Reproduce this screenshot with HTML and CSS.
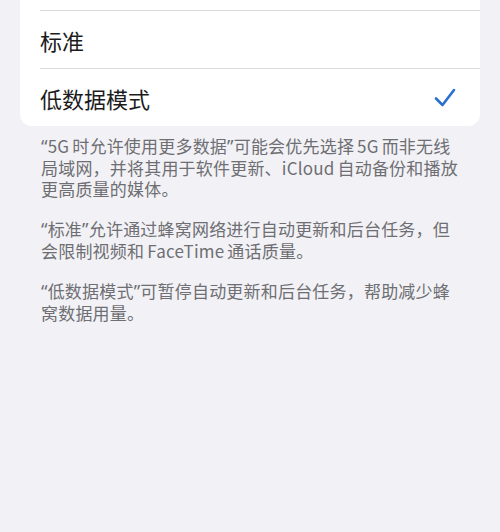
FILE: index.html
```html
<!DOCTYPE html>
<html lang="zh-CN">
<head>
<meta charset="utf-8">
<link rel="stylesheet" href="styles.css">
</head>
<body>
<div class="page">
  <div class="card">
    <div class="row row-cut"></div>
    <div class="row"><span class="label">标准</span></div>
    <div class="row"><span class="label">低数据模式</span>
      <svg class="check" width="22" height="20" viewBox="0 0 22 20"><path d="M2 10.5 L8.5 17 L20 2" fill="none" stroke="#2a70d0" stroke-width="2.6" stroke-linecap="round" stroke-linejoin="round"/></svg>
    </div>
  </div>
  <div class="footer">
    <p><span class="q">“</span>5G 时允许使用更多数据<span class="q">”</span>可能会优先选择 5G 而非无线<br>局域网，并将其用于软件更新、iCloud 自动备份和播放<br>更高质量的媒体。</p>
    <p><span class="q">“</span>标准<span class="q">”</span>允许通过蜂窝网络进行自动更新和后台任务，但<br>会限制视频和 FaceTime 通话质量。</p>
    <p><span class="q">“</span>低数据模式<span class="q">”</span>可暂停自动更新和后台任务，帮助减少蜂<br>窝数据用量。</p>
  </div>
</div>
</body>
</html>
```
FILE: styles.css
```css
html, body {
  margin: 0;
  padding: 0;
  background: #f2f2f6;
  font-family: "Noto Sans CJK SC", "Noto Sans", sans-serif;
}
.page {
  width: 500px;
  height: 532px;
  padding: 0 20px;
  box-sizing: border-box;
}
.card {
  background: #ffffff;
  border-radius: 0 0 12px 12px;
  padding-left: 20px;
}
.row {
  height: 57px;
  display: flex;
  align-items: center;
  justify-content: space-between;
  padding-right: 24px;
  border-top: 1px solid #dcdce0;
}
.row-cut {
  height: 10px;
  border-top: none;
}
.label {
  font-size: 22px;
  color: #1c1c1e;
}
.check {
  display: block;
  margin-top: 1px;
}
.footer {
  padding: 9px 10px 0 21px;
  color: #6e6e73;
  font-size: 17px;
  letter-spacing: 0.2px;
  word-spacing: -1px;
  line-height: 21px;
}
.footer p {
  margin: 0 0 19px 0;
  white-space: nowrap;
}
.q {
  font-family: "Noto Sans", sans-serif;
  font-size: 18px;
}
```
